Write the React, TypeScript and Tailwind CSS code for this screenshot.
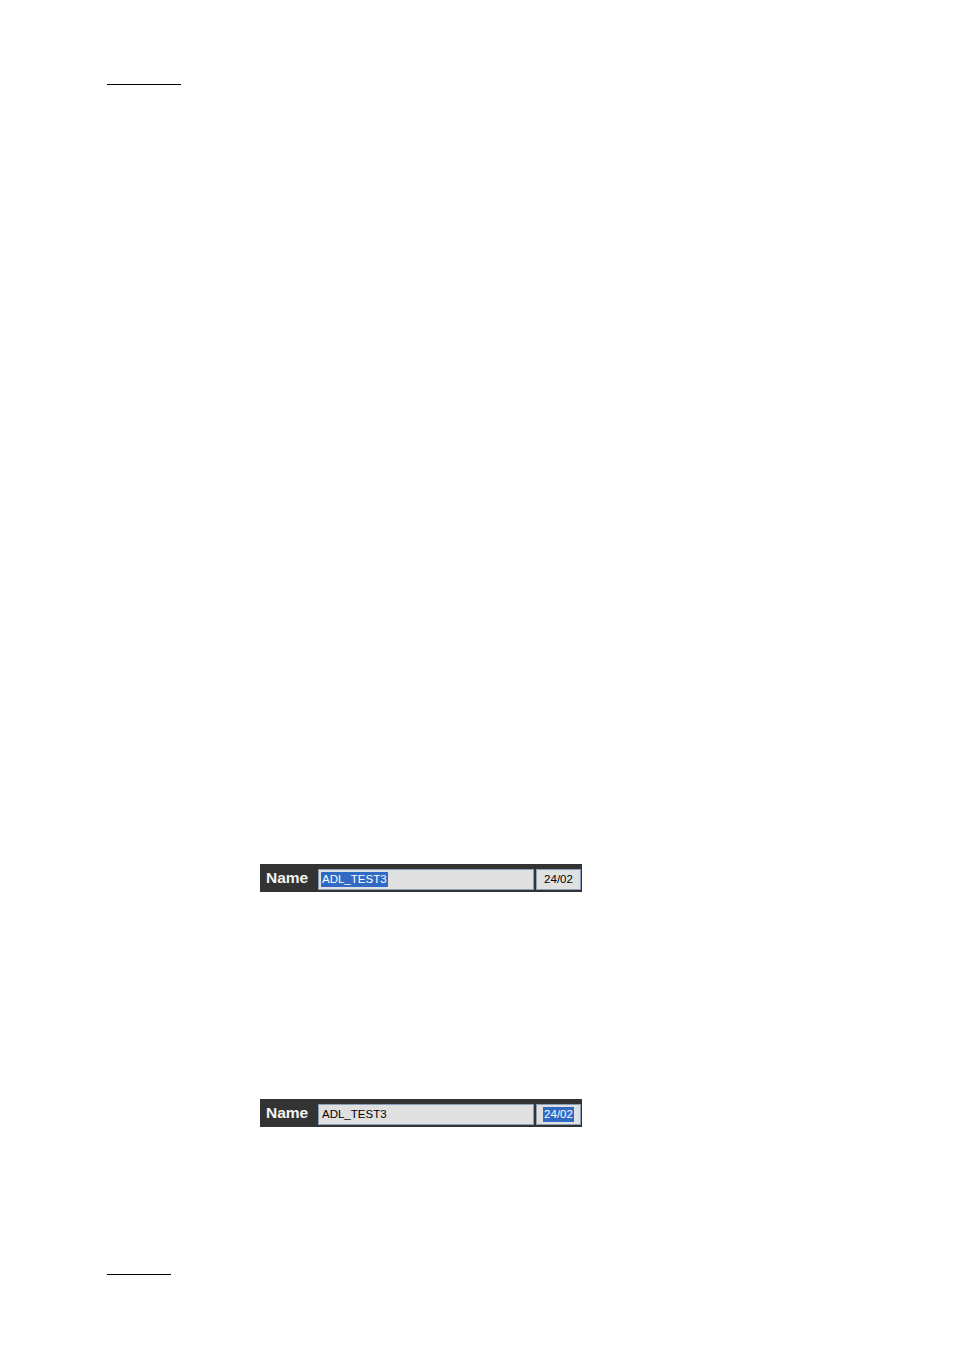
import React from "react";

function Field({ selectName, selectDate }: { selectName: boolean; selectDate: boolean }) {
  return (
    <div className="flex h-[28px] w-[322px] items-start bg-[#333333] pt-[5px]" style={{ fontFamily: '"Liberation Sans", Arial, sans-serif' }}>
      <div className="flex h-[21px] w-[58px] items-center pb-[3px] pl-[6px] text-[15.5px] font-bold leading-none text-[#f4f4f4]">Name</div>
      <div className="flex h-[21px] w-[216px] items-center border border-[#8a9fb8] bg-[#e0e0e0] pl-[2px] text-[11.5px] leading-none text-black">
        <span className={selectName ? "bg-[#316ac5] px-px py-[2px] text-white" : "px-px py-[2px]"}>ADL_TEST3</span>
      </div>
      <div className="ml-[2px] flex h-[21px] w-[45px] items-center justify-center border border-[#8a9fb8] bg-[#e0e0e0] text-[11.5px] leading-none text-black">
        <span className={selectDate ? "bg-[#316ac5] px-px py-[2px] text-white" : "px-px py-[2px]"}>24/02</span>
      </div>
    </div>
  );
}

export default function App() {
  return (
    <div className="min-h-[1350px] w-[954px] bg-white pl-[107px] pt-[84px]">
      <div className="h-px w-[74px] bg-black" />
      <div className="ml-[153px] mt-[779px]">
        <Field selectName={true} selectDate={false} />
      </div>
      <div className="ml-[153px] mt-[207px]">
        <Field selectName={false} selectDate={true} />
      </div>
      <div className="mt-[147px] h-px w-[64px] bg-black" />
    </div>
  );
}
